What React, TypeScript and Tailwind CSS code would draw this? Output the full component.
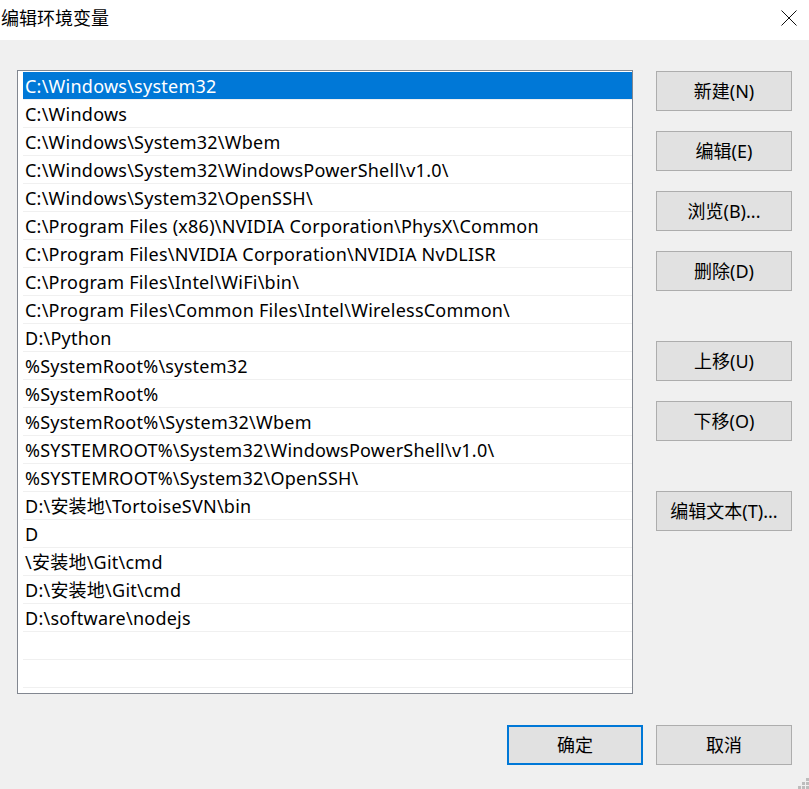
import React from "react";

const items = [
  "C:\\Windows\\system32",
  "C:\\Windows",
  "C:\\Windows\\System32\\Wbem",
  "C:\\Windows\\System32\\WindowsPowerShell\\v1.0\\",
  "C:\\Windows\\System32\\OpenSSH\\",
  "C:\\Program Files (x86)\\NVIDIA Corporation\\PhysX\\Common",
  "C:\\Program Files\\NVIDIA Corporation\\NVIDIA NvDLISR",
  "C:\\Program Files\\Intel\\WiFi\\bin\\",
  "C:\\Program Files\\Common Files\\Intel\\WirelessCommon\\",
  "D:\\Python",
  "%SystemRoot%\\system32",
  "%SystemRoot%",
  "%SystemRoot%\\System32\\Wbem",
  "%SYSTEMROOT%\\System32\\WindowsPowerShell\\v1.0\\",
  "%SYSTEMROOT%\\System32\\OpenSSH\\",
  "D:\\安装地\\TortoiseSVN\\bin",
  "D",
  "\\安装地\\Git\\cmd",
  "D:\\安装地\\Git\\cmd",
  "D:\\software\\nodejs",
  "",
  "",
];

function Btn({ label, className = "", primary = false }: { label: string; className?: string; primary?: boolean }) {
  return (
    <div
      className={
        "w-[136px] h-[40px] flex items-center justify-center bg-[#e1e1e1] text-[18px] text-black " +
        (primary ? "border-2 border-[#0078d7] " : "border border-[#adadad] ") +
        className
      }
    >
      {label}
    </div>
  );
}

export default function App() {
  return (
    <div
      className="relative w-[809px] h-[789px] bg-[#f0f0f0] overflow-hidden"
      style={{ fontFamily: '"Noto Sans", "Noto Sans CJK SC", sans-serif' }}
    >
      <div className="h-[40px] bg-white flex items-start justify-between">
        <span className="text-[18px] leading-[24px] pt-[6px] pl-[1px] text-black">编辑环境变量</span>
        <svg width="16" height="16" viewBox="0 0 16 16" className="mt-[10px] mr-[12px]">
          <path d="M0.5 0.5 L15.5 15.5 M15.5 0.5 L0.5 15.5" stroke="#111" strokeWidth="1" />
        </svg>
      </div>

      <div className="flex pl-[17px] pt-[30px]">
        <div className="w-[616px] h-[624px] border border-[#828790] bg-white pl-[5px] pt-[1px] overflow-hidden">
          {items.map((t, i) => (
            <div key={i} className="h-[28px] border-b border-[#f0f0f0]">
              <div
                className={
                  "h-[27px] flex items-center pl-[2px] text-[18px] tracking-[0.24px] leading-none whitespace-nowrap " +
                  (i === 0 ? "bg-[#0078d7] text-white" : "text-black")
                }
              >
                {t}
              </div>
            </div>
          ))}
        </div>
        <div className="ml-[23px] pt-[1px] flex flex-col">
          <Btn label="新建(N)" />
          <Btn label="编辑(E)" className="mt-[20px]" />
          <Btn label="浏览(B)..." className="mt-[20px]" />
          <Btn label="删除(D)" className="mt-[20px]" />
          <Btn label="上移(U)" className="mt-[50px]" />
          <Btn label="下移(O)" className="mt-[20px]" />
          <Btn label="编辑文本(T)..." className="mt-[50px]" />
        </div>
      </div>

      <div className="flex justify-end gap-[13px] pr-[17px] mt-[31px]">
        <Btn label="确定" primary />
        <Btn label="取消" />
      </div>

      <svg width="12" height="12" viewBox="0 0 12 12" className="absolute right-0 bottom-0">
        <rect x="9" y="1" width="3" height="3" fill="#bdbdbd" />
        <rect x="5" y="5" width="3" height="3" fill="#bdbdbd" />
        <rect x="9" y="5" width="3" height="3" fill="#bdbdbd" />
        <rect x="1" y="9" width="3" height="3" fill="#bdbdbd" />
        <rect x="5" y="9" width="3" height="3" fill="#bdbdbd" />
        <rect x="9" y="9" width="3" height="3" fill="#bdbdbd" />
      </svg>
    </div>
  );
}
